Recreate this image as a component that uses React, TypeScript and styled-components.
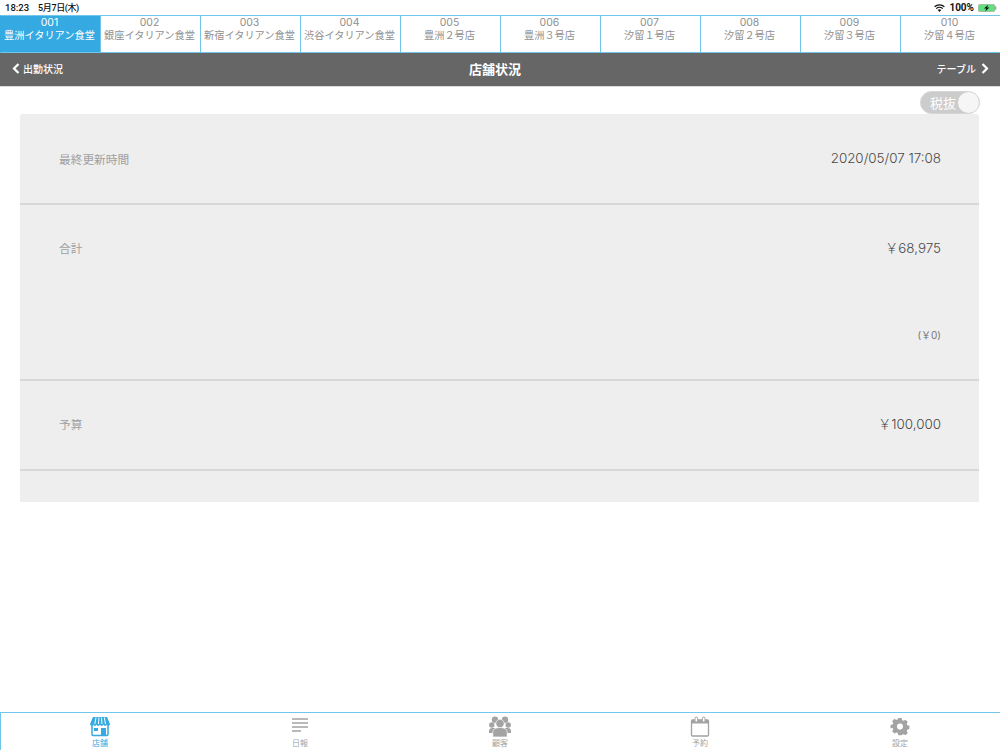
import React from 'react';
import styled, { createGlobalStyle } from 'styled-components';

const SANS_FAMILY = `"Noto Sans CJK JP", "Noto Sans", sans-serif`;
const LATIN_FAMILY = `Inter, "Noto Sans CJK JP", sans-serif`;
const ACCENT = '#35a9e1';
const LINE = '#72c6ea';

const GlobalStyle = createGlobalStyle`
  html, body {
    margin: 0;
    padding: 0;
    background: #fff;
  }
  #root {
    width: 1000px;
    height: 750px;
  }
`;

const Page = styled.div`
  width: 1000px;
  height: 750px;
  display: flex;
  flex-direction: column;
  overflow: hidden;
  font-family: ${SANS_FAMILY};
`;

const StatusBar = styled.div`
  height: 15px;
  display: flex;
  align-items: center;
  justify-content: space-between;
  padding: 0 3px 0 5px;
  font-family: Roboto, ${SANS_FAMILY};
  font-size: 9.5px;
  font-weight: 500;
  color: #111;
`;

const StatusGroup = styled.div<{ $gap: number }>`
  display: flex;
  align-items: center;
  gap: ${p => p.$gap}px;
`;

const StatusDate = styled.span`
  font-size: 9px;
  letter-spacing: -0.4px;
`;

const StatusBattery = styled.span`
  font-weight: 700;
  font-size: 10px;
`;

const StoreTabs = styled.div`
  height: 38px;
  display: grid;
  grid-template-columns: repeat(10, 100px);
`;

const StoreTab = styled.div<{ $active?: boolean }>`
  box-sizing: border-box;
  display: flex;
  flex-direction: column;
  align-items: center;
  padding: 1px 2px 0 0;
  border-top: 1px solid ${LINE};
  border-bottom: 1px solid ${LINE};
  border-left: 1px solid ${p => (p.$active ? ACCENT : LINE)};
  background: ${p => (p.$active ? ACCENT : '#fff')};
  color: ${p => (p.$active ? '#fff' : '#8f8f8f')};
  white-space: nowrap;
`;

const StoreCode = styled.span`
  font-family: ${LATIN_FAMILY};
  font-size: 10.5px;
  line-height: 12px;
`;

const StoreName = styled.span`
  font-size: 10.2px;
  line-height: 12px;
`;

const NavBar = styled.div`
  box-sizing: border-box;
  height: 34px;
  background: #666;
  color: #fff;
  display: grid;
  grid-template-columns: 1fr auto 1fr;
  align-items: center;
  padding: 0 11px 2px 12px;
  border-bottom: 1px solid #ddd;
`;

const NavLink = styled.div<{ $right?: boolean }>`
  display: flex;
  align-items: center;
  justify-content: ${p => (p.$right ? 'flex-end' : 'flex-start')};
  gap: ${p => (p.$right ? 5 : 3)}px;
  font-size: 10px;
  font-weight: 500;
`;

const NavTitle = styled.div`
  font-size: 13px;
  font-weight: 700;
  margin-left: -11px;
`;

const ToggleRow = styled.div`
  box-sizing: border-box;
  height: 27px;
  display: flex;
  align-items: center;
  justify-content: flex-end;
  padding: 3px 20px 0 0;
`;

const Toggle = styled.div`
  width: 60px;
  height: 23px;
  box-sizing: border-box;
  border-radius: 12px;
  background: #ccc;
  border: 1px solid #d6d6d6;
  display: flex;
  align-items: center;
  justify-content: space-between;
  padding: 0 0 0 9px;
  color: #fff;
  font-size: 13px;
`;

const ToggleKnob = styled.span`
  width: 21px;
  height: 21px;
  border-radius: 50%;
  background: #f6f6f6;
`;

const Panel = styled.div`
  margin: 0 21px 0 20px;
  background: #eee;
  border-radius: 3px 3px 0 0;
  height: 388px;
  display: flex;
  flex-direction: column;
`;

const Row = styled.div<{ $height: number; $top: number }>`
  box-sizing: border-box;
  height: ${p => p.$height}px;
  border-bottom: 2px solid #d8d8d8;
  padding: ${p => p.$top}px 38px 0 39px;
  color: #999;
`;

const RowLine = styled.div`
  display: flex;
  justify-content: space-between;
  align-items: center;
  height: 18px;
`;

const Label = styled.span`
  font-size: 11.7px;
  color: #a0a0a0;
`;

const Value = styled.span`
  font-family: ${LATIN_FAMILY};
  font-size: 13.4px;
  font-weight: 300;
  color: #4a4a4a;
`;

const SubValue = styled.div`
  font-family: ${LATIN_FAMILY};
  font-size: 10px;
  line-height: 14px;
  color: #777;
  text-align: right;
  margin-top: 72px;
`;

const TabBar = styled.div`
  margin-top: auto;
  height: 38px;
  box-sizing: border-box;
  border-top: 1px solid ${LINE};
  box-shadow: inset 1px 0 0 ${LINE};
  display: grid;
  grid-template-columns: repeat(5, 1fr);
`;

const TabItem = styled.div<{ $active?: boolean }>`
  display: flex;
  flex-direction: column;
  align-items: center;
  padding-top: 3px;
  color: ${p => (p.$active ? ACCENT : '#a3a3a3')};
`;

const TabIcon = styled.svg`
  width: 22px;
  height: 22px;
  display: block;
`;

const TabLabel = styled.span`
  font-size: 8px;
  line-height: 10px;
`;

const Chevron = ({ right }: { right?: boolean }) => (
  <svg width="8" height="11" viewBox="0 0 8 11">
    <path
      d={right ? 'M1.5 1l4.5 4.5L1.5 10' : 'M6.5 1L2 5.5 6.5 10'}
      fill="none"
      stroke="#fff"
      strokeWidth="2.2"
    />
  </svg>
);

const stores = [
  ['001', '豊洲イタリアン食堂'],
  ['002', '銀座イタリアン食堂'],
  ['003', '新宿イタリアン食堂'],
  ['004', '渋谷イタリアン食堂'],
  ['005', '豊洲２号店'],
  ['006', '豊洲３号店'],
  ['007', '汐留１号店'],
  ['008', '汐留２号店'],
  ['009', '汐留３号店'],
  ['010', '汐留４号店'],
];

const StoreIcon = () => (
  <TabIcon viewBox="0 0 22 22">
    <path d="M3 7v11.500a1 1 0 0 0 1 1h14a1 1 0 0 0 1-1V7" fill="#fff" stroke="currentColor" strokeWidth="1.500" />
    <path d="M4 1h14l3 7c0 2-2.800 2.300-3.200.4-.4 1.900-3 1.900-3.400 0-.4 1.900-3 1.900-3.400 0-.4 1.900-3 1.900-3.400 0-.4 1.900-3 1.900-3.400 0C3.800 10.300 1 10 1 8z" fill="currentColor" />
    <path d="M7 1.500L5.800 8M10 1.500L9.500 8M12.500 1.500L13 8M15.300 1.500L16.500 8" stroke="#fff" strokeWidth="1" />
    <rect x="5" y="12" width="4" height="3" fill="currentColor" />
    <rect x="12" y="12" width="5" height="7" fill="currentColor" />
  </TabIcon>
);

const ReportIcon = () => (
  <TabIcon viewBox="0 0 22 22">
    <path d="M3 3h16M3 7h16M3 11h16M3 15h9" stroke="currentColor" strokeWidth="1.700" />
  </TabIcon>
);

const CustomerIcon = () => (
  <TabIcon viewBox="0 0 22 22">
    <g fill="currentColor">
      <circle cx="6" cy="3.800" r="3.200" />
      <circle cx="16" cy="3.800" r="3.200" />
      <circle cx="2.800" cy="9" r="2.700" />
      <circle cx="19.200" cy="9" r="2.700" />
      <path d="M0 17v-2c0-2 1.500-3 3.500-3h15c2 0 3.500 1 3.500 3v2z" />
      <g stroke="#fff" strokeWidth=".7">
        <circle cx="11" cy="7.500" r="4.200" />
        <path d="M3.800 21v-4.500c0-3.500 3.500-5 7.200-5s7.200 1.500 7.200 5V21z" />
      </g>
    </g>
  </TabIcon>
);

const CalendarIcon = () => (
  <TabIcon viewBox="0 0 22 22">
    <path d="M3.500 4h15a1 1 0 0 1 1 1v14a1 1 0 0 1-1 1h-15a1 1 0 0 1-1-1V5a1 1 0 0 1 1-1z" fill="none" stroke="currentColor" strokeWidth="1.300" />
    <path d="M2.500 4h17v3.500h-17z" fill="currentColor" />
    <rect x="6" y="1" width="2.600" height="5" rx="1.300" fill="#fff" stroke="currentColor" />
    <rect x="13.400" y="1" width="2.600" height="5" rx="1.300" fill="#fff" stroke="currentColor" />
  </TabIcon>
);

const GearIcon = () => (
  <TabIcon viewBox="0 0 22 22">
    <path
      fillRule="evenodd"
      fill="currentColor"
      d="M9 2h4l.6 2.500 1.700.7 2.200-1.300 2.600 2.800-1.300 2.100.7 1.700 2.500.6v3.800l-2.500.6-.7 1.700 1.300 2.100-2.600 2.800-2.200-1.300-1.700.7L13 22H9l-.6-2.500-1.700-.7-2.200 1.300-2.600-2.800 1.300-2.100-.7-1.700L0 13.900v-3.800l2.500-.6.700-1.700-1.300-2.100 2.600-2.800 2.200 1.300 1.700-.7zM11 8.500a3.500 3.500 0 1 0 0 7 3.500 3.500 0 0 0 0-7z"
      transform="translate(1.500 .3) scale(.86)"
    />
  </TabIcon>
);

const WifiIcon = () => (
  <svg width="11" height="8" viewBox="0 0 11 8">
    <g fill="none" stroke="#111" strokeWidth="1.300">
      <path d="M.6 2.800a7 7 0 0 1 9.800 0" />
      <path d="M2.300 4.600a4.600 4.600 0 0 1 6.400 0" />
    </g>
    <path d="M5.500 8L3.700 6.100a2.600 2.600 0 0 1 3.600 0z" fill="#111" />
  </svg>
);

const BatteryIcon = () => (
  <svg width="19" height="8" viewBox="0 0 19 8">
    <rect x=".4" y=".4" width="16.400" height="7.200" rx="1.500" fill="#62e07e" stroke="#999" strokeWidth=".6" />
    <rect x="17" y="2.500" width="1.300" height="3" fill="#999" />
    <path d="M10.200.8L6 4.600h2.300L7.200 7.400l4.200-3.800H9.100z" fill="#111" />
  </svg>
);

const App = () => {
  return (
    <>
      <GlobalStyle />
      <Page>
        <StatusBar>
          <StatusGroup $gap={9}>
            <span>18:23</span>
            <StatusDate>5月7日(木)</StatusDate>
          </StatusGroup>
          <StatusGroup $gap={4}>
            <WifiIcon />
            <StatusBattery>100%</StatusBattery>
            <BatteryIcon />
          </StatusGroup>
        </StatusBar>
        <StoreTabs>
          {stores.map(([code, name], i) => (
            <StoreTab key={code} $active={i === 0}>
              <StoreCode>{code}</StoreCode>
              <StoreName>{name}</StoreName>
            </StoreTab>
          ))}
        </StoreTabs>
        <NavBar>
          <NavLink>
            <Chevron />
            出勤状況
          </NavLink>
          <NavTitle>店舗状況</NavTitle>
          <NavLink $right>
            テーブル
            <Chevron right />
          </NavLink>
        </NavBar>
        <ToggleRow>
          <Toggle>
            税抜
            <ToggleKnob />
          </Toggle>
        </ToggleRow>
        <Panel>
          <Row $height={91} $top={35}>
            <RowLine>
              <Label>最終更新時間</Label>
              <Value>2020/05/07 17:08</Value>
            </RowLine>
          </Row>
          <Row $height={176} $top={33}>
            <RowLine>
              <Label>合計</Label>
              <Value>￥68,975</Value>
            </RowLine>
            <SubValue>(￥0)</SubValue>
          </Row>
          <Row $height={90} $top={33}>
            <RowLine>
              <Label>予算</Label>
              <Value>￥100,000</Value>
            </RowLine>
          </Row>
        </Panel>
        <TabBar>
          <TabItem $active>
            <StoreIcon />
            <TabLabel>店舗</TabLabel>
          </TabItem>
          <TabItem>
            <ReportIcon />
            <TabLabel>日報</TabLabel>
          </TabItem>
          <TabItem>
            <CustomerIcon />
            <TabLabel>顧客</TabLabel>
          </TabItem>
          <TabItem>
            <CalendarIcon />
            <TabLabel>予約</TabLabel>
          </TabItem>
          <TabItem>
            <GearIcon />
            <TabLabel>設定</TabLabel>
          </TabItem>
        </TabBar>
      </Page>
    </>
  );
};

export default App;
